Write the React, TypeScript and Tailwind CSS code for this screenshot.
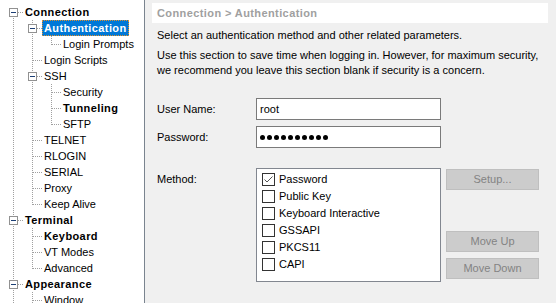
import React from "react";

type Row = {
  label: string;
  level: number;
  rails: boolean[];
  up?: boolean;
  down?: boolean;
  expander?: boolean;
  bold?: boolean;
  selected?: boolean;
};

const rows: Row[] = [
  { label: "Connection", level: 0, rails: [], up: false, down: true, expander: true, bold: true },
  { label: "Authentication", level: 1, rails: [true], down: true, expander: true, bold: true, selected: true },
  { label: "Login Prompts", level: 2, rails: [true, true] },
  { label: "Login Scripts", level: 1, rails: [true], down: true },
  { label: "SSH", level: 1, rails: [true], down: true, expander: true },
  { label: "Security", level: 2, rails: [true, true], down: true },
  { label: "Tunneling", level: 2, rails: [true, true], down: true, bold: true },
  { label: "SFTP", level: 2, rails: [true, true] },
  { label: "TELNET", level: 1, rails: [true], down: true },
  { label: "RLOGIN", level: 1, rails: [true], down: true },
  { label: "SERIAL", level: 1, rails: [true], down: true },
  { label: "Proxy", level: 1, rails: [true], down: true },
  { label: "Keep Alive", level: 1, rails: [true] },
  { label: "Terminal", level: 0, rails: [], down: true, expander: true, bold: true },
  { label: "Keyboard", level: 1, rails: [true], down: true, bold: true },
  { label: "VT Modes", level: 1, rails: [true], down: true },
  { label: "Advanced", level: 1, rails: [true] },
  { label: "Appearance", level: 0, rails: [], down: true, expander: true, bold: true },
  { label: "Window", level: 1, rails: [true], down: true },
];

const methods = [
  { name: "Password", checked: true },
  { name: "Public Key" },
  { name: "Keyboard Interactive" },
  { name: "GSSAPI" },
  { name: "PKCS11" },
  { name: "CAPI" },
];

const dot = "#a0a0a0";

const TreeRow = ({ row }: { row: Row }) => (
  <div className="flex h-[16px] items-center">
    {row.rails.map((on, i) => (
      <svg key={i} width="19" height="16" className="shrink-0" shapeRendering="crispEdges">
        {on && <line x1="8.5" y1="0" x2="8.5" y2="16" stroke={dot} strokeDasharray="1 1" />}
      </svg>
    ))}
    <svg width="18" height="16" className="shrink-0" shapeRendering="crispEdges">
      <line x1="8.5" y1={row.up === false ? 8 : 0} x2="8.5" y2={row.down ? 16 : 9} stroke={dot} strokeDasharray="1 1" />
      <line x1="9" y1="8.5" x2="18" y2="8.5" stroke={dot} strokeDasharray="1 1" />
      {row.expander && (
        <>
          <rect x="4.5" y="4.5" width="8" height="8" fill="#fff" stroke="#919191" />
          <line x1="6" y1="8.5" x2="11" y2="8.5" stroke="#1c3f75" />
        </>
      )}
    </svg>
    <span
      className={`h-[16px] px-[1px] leading-[14px] whitespace-nowrap border ${
        row.selected ? "bg-[#0078d7] text-white border-dotted border-[#e0902c]" : "border-transparent text-black"
      } ${row.bold ? "font-bold tracking-[0.4px]" : ""}`}
    >
      {row.label}
    </span>
  </div>
);

const Button = ({ label, className = "" }: { label: string; className?: string }) => (
  <div className={`h-[21px] w-[93px] border border-[#bfbfbf] bg-[#cccccc] text-center leading-[19px] text-[#838383] ${className}`}>
    {label}
  </div>
);

export default function App() {
  return (
    <div className="flex h-[303px] w-[556px] overflow-hidden text-[11px] text-black [font-family:Liberation_Sans,Arial,sans-serif]">
      {/* tree */}
      <div className="w-[145px] shrink-0 overflow-hidden border-r border-[#7a848f] bg-white pl-[5px] pt-[4px]">
        {rows.map((r) => (
          <TreeRow key={r.label} row={r} />
        ))}
      </div>

      {/* page */}
      <div className="flex-1 bg-[#f0f0f0] pl-[7px] pr-[8px] pt-[3px]">
        <div className="h-[20px] bg-white pl-[5px] font-bold tracking-[0.4px] leading-[20px] text-[#a0a0a0]">
          Connection &gt; Authentication
        </div>
        <div className="pl-[5px] pt-[5px] leading-[15px] whitespace-nowrap">
          <p>Select an authentication method and other related parameters.</p>
          <p className="mt-[5px]">
            Use this section to save time when logging in. However, for maximum security,
            <br />
            we recommend you leave this section blank if security is a concern.
          </p>

          <div className="mt-[20px] flex items-center">
            <span className="w-[99px]">User Name:</span>
            <div className="h-[22px] w-[185px] border border-[#7a7a7a] bg-white pl-[3px] leading-[20px]">root</div>
          </div>
          <div className="mt-[6px] flex items-center">
            <span className="w-[99px]">Password:</span>
            <div className="flex h-[22px] w-[185px] items-center gap-[2px] border border-[#7a7a7a] bg-white pl-[3px]">
              {Array.from({ length: 10 }).map((_, i) => (
                <span key={i} className="h-[5px] w-[5px] rounded-full bg-black" />
              ))}
            </div>
          </div>

          <div className="mt-[20px] flex items-start">
            <span className="w-[99px] pt-[4px]">Method:</span>
            <div className="h-[114px] w-[185px] border border-[#828790] bg-white pl-[5px] pt-[2px]">
              {methods.map((m) => (
                <div key={m.name} className="flex h-[17px] items-center gap-[4px]">
                  <span className="flex h-[13px] w-[13px] items-center justify-center border border-[#333333] bg-white">
                    {m.checked && (
                      <svg width="11" height="11" viewBox="0 0 11 11">
                        <path d="M1.5 5.5 L4 8 L9.5 2.5" fill="none" stroke="#555" strokeWidth="1" />
                      </svg>
                    )}
                  </span>
                  <span>{m.name}</span>
                </div>
              ))}
            </div>
            <div className="ml-[5px] mt-[1px] flex flex-col">
              <Button label="Setup..." />
              <Button label="Move Up" className="mt-[41px]" />
              <Button label="Move Down" className="mt-[6px]" />
            </div>
          </div>
        </div>
      </div>
    </div>
  );
}
